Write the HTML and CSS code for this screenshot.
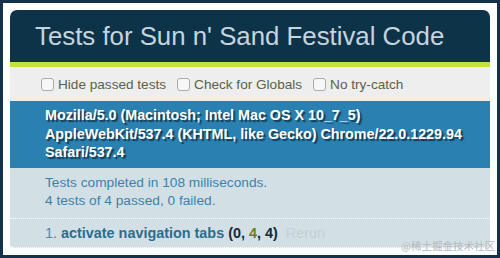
FILE: index.html
```html
<!DOCTYPE html>
<html>
<head>
<meta charset="utf-8">
<link rel="stylesheet" href="styles.css">
</head>
<body>
<div class="frame">
  <div class="qunit">
    <h1 class="header">Tests for Sun n' Sand Festival Code</h1>
    <div class="banner"></div>
    <div class="toolbar">
      <label class="opt"><span class="box"></span>Hide passed tests</label>
      <label class="opt"><span class="box"></span>Check for Globals</label>
      <label class="opt"><span class="box"></span>No try-catch</label>
    </div>
    <div class="ua">Mozilla/5.0 (Macintosh; Intel Mac OS X 10_7_5) AppleWebKit/537.4 (KHTML, like Gecko) Chrome/22.0.1229.94 Safari/537.4</div>
    <div class="result">Tests completed in 108 milliseconds.<br>4 tests of 4 passed, 0 failed.</div>
    <ol class="tests">
      <li class="test"><span class="num">1.</span> <strong class="name">activate navigation tabs</strong> <b class="counts">(<b class="failed">0</b>, <b class="passed">4</b>, 4)</b> <a class="rerun">Rerun</a></li>
    </ol>
  </div>
  <div class="watermark">@稀土掘金技术社区</div>
</div>
</body>
</html>
```
FILE: styles.css
```css
html, body {
  margin: 0;
  padding: 0;
}
body {
  width: 500px;
  height: 258px;
  font-family: "Liberation Sans", Arial, sans-serif;
}
.frame {
  position: relative;
  box-sizing: border-box;
  width: 500px;
  height: 258px;
  border: 3px solid #143149;
  background: #fbfcfc;
  padding: 7px;
}
.qunit {
  display: flex;
  flex-direction: column;
}
.header {
  margin: 0;
  height: 52px;
  box-sizing: border-box;
  padding: 1px 0 0 25px;
  display: flex;
  align-items: center;
  background: #0d3349;
  color: #c6d4de;
  font-weight: normal;
  font-size: 25.8px;
  border-radius: 7px 7px 0 0;
}
.banner {
  height: 5px;
  background: #c3e03c;
}
.toolbar {
  height: 34px;
  box-sizing: border-box;
  background: #eeeeee;
  padding-left: 31px;
  display: flex;
  align-items: center;
  gap: 11px;
  color: #5a6249;
  font-size: 13.6px;
}
.opt {
  display: flex;
  align-items: center;
  gap: 4px;
}
.box {
  display: inline-block;
  width: 11px;
  height: 11px;
  border: 1px solid #a9acad;
  border-radius: 3px;
  background: #f7f7f7;
}
.ua {
  height: 67px;
  box-sizing: border-box;
  background: #2a80b0;
  color: #ffffff;
  font-weight: bold;
  font-size: 14.3px;
  line-height: 18.5px;
  padding: 5px 0 0 35px;
  text-shadow: rgba(0, 0, 0, 0.55) 2px 2px 1px;
}
.result {
  height: 51px;
  box-sizing: border-box;
  background: #d2e0e6;
  color: #3a82ad;
  font-size: 13.7px;
  line-height: 18px;
  padding: 6px 0 0 35px;
  border-bottom: 1px dotted #ffffff;
}
.tests {
  margin: 0;
  padding: 0;
  list-style: none;
}
.test {
  height: 29px;
  box-sizing: border-box;
  background: #d2e0e6;
  padding: 0 0 0 35px;
  display: flex;
  align-items: center;
  gap: 4px;
  font-size: 14.4px;
  border-radius: 0 0 4px 4px;
  border-bottom: 1px dotted #ffffff;
}
.num {
  color: #4f88ab;
}
.name {
  color: #2a6d8e;
}
.counts {
  color: #0f2a3a;
}
.failed {
  color: #16283a;
}
.passed {
  color: #6a7f1a;
}
.rerun {
  color: #c6cfd5;
  margin-left: 4px;
}
.watermark {
  position: absolute;
  right: 2px;
  bottom: 2px;
  font-family: "Noto Sans CJK SC", sans-serif;
  font-size: 10.5px;
  color: #b4b8bc;
}
```
